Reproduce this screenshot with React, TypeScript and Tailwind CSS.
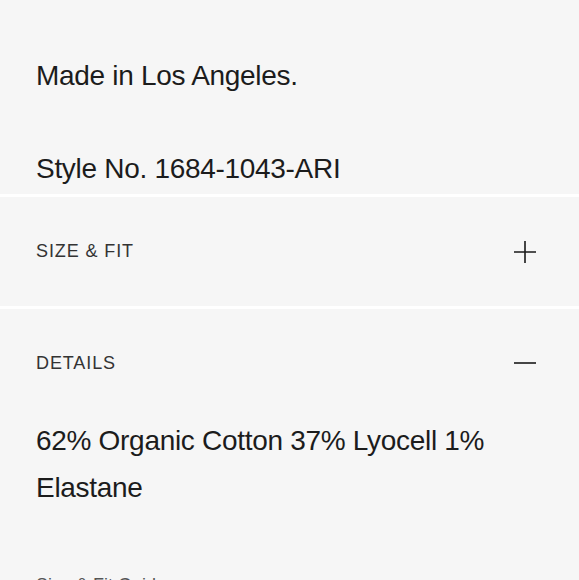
import { ReactNode } from 'react';

const font = { fontFamily: '"Liberation Sans", Arial, Helvetica, sans-serif' };

function PlusIcon() {
  return (
    <svg width="24" height="24" viewBox="0 0 24 24" className="text-[#1a1a1a]">
      <path d="M1 12H23M12 1V23" stroke="currentColor" strokeWidth="1.6" fill="none" />
    </svg>
  );
}

function MinusIcon() {
  return (
    <svg width="24" height="24" viewBox="0 0 24 24" className="text-[#1a1a1a]">
      <path d="M1 12H23" stroke="currentColor" strokeWidth="1.6" fill="none" />
    </svg>
  );
}

function AccordionHeader({ title, open }: { title: string; open: boolean }) {
  return (
    <div className={`flex items-center justify-between pl-9 pr-[42px] ${open ? 'h-[108px]' : 'h-[109px]'}`}>
      <span className="text-[18px] tracking-[0.9px] text-[#333]">{title}</span>
      {open ? <MinusIcon /> : <PlusIcon />}
    </div>
  );
}

function Body({ children }: { children: ReactNode }) {
  return <p className="text-[28px] leading-[47px] tracking-[-0.3px] text-[#1c1c1c]">{children}</p>;
}

export default function App() {
  return (
    <div className="w-[579px] h-[580px] overflow-hidden bg-[#f6f6f6]" style={font}>
      {/* intro */}
      <div className="px-9 pt-[52px] pb-[2px]">
        <Body>Made in Los Angeles.</Body>
        <div className="h-[46px]" />
        <Body>Style No. 1684-1043-ARI</Body>
      </div>

      {/* size & fit */}
      <div className="border-t-[3px] border-white">
        <AccordionHeader title="SIZE & FIT" open={false} />
      </div>

      {/* details */}
      <div className="border-t-[3px] border-white">
        <AccordionHeader title="DETAILS" open />
        <div className="px-9">
          <Body>62% Organic Cotton 37% Lyocell 1% Elastane</Body>
          <p className="mt-[63px] text-[18px] leading-[22px] text-[#555]">Size &amp; Fit Guide</p>
        </div>
      </div>
    </div>
  );
}
